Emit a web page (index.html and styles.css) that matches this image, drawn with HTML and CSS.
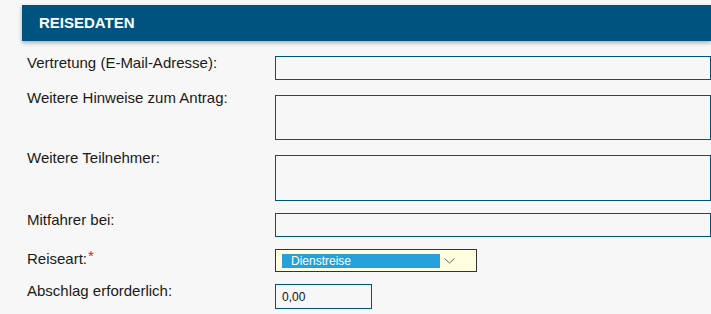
FILE: index.html
```html
<!DOCTYPE html>
<html lang="de">
<head>
    <meta charset="UTF-8">
    <meta name="viewport" content="width=device-width, initial-scale=1.0">
    <title>Reisedaten</title>
    <link rel="stylesheet" href="styles.css">
</head>
<body>

<section class="panel">
    <h2 class="panel-title">REISEDATEN</h2>

    <form class="travel-form">
        <div class="row wide-gap">
            <label for="vertretung">Vertretung (E-Mail-Adresse):</label>
            <input type="text" id="vertretung" class="field">
        </div>

        <div class="row row-area wide-gap">
            <label for="hinweise">Weitere Hinweise zum Antrag:</label>
            <textarea id="hinweise" class="field area-1"></textarea>
        </div>

        <div class="row row-area">
            <label for="teilnehmer">Weitere Teilnehmer:</label>
            <textarea id="teilnehmer" class="field area-2"></textarea>
        </div>

        <div class="row">
            <label for="mitfahrer">Mitfahrer bei:</label>
            <input type="text" id="mitfahrer" class="field">
        </div>

        <div class="row">
            <label>Reiseart:<span class="req">*</span></label>
            <div class="select" role="combobox" aria-expanded="false">
                <span class="select-value">Dienstreise</span>
                <svg class="chevron" width="11" height="6" viewBox="0 0 11 6">
                    <path d="M0.5 0.5 L5.5 5 L10.5 0.5" fill="none" stroke="#666" stroke-width="1"/>
                </svg>
            </div>
        </div>

        <div class="row">
            <label for="abschlag">Abschlag erforderlich:</label>
            <input type="text" id="abschlag" class="field small" value="0,00">
        </div>
    </form>
</section>

</body>
</html>
```

FILE: styles.css
```css
* {
    box-sizing: border-box;
    margin: 0;
    padding: 0;
}

body {
    font-family: 'Liberation Sans', Arial, sans-serif;
    background-color: #f7f7f7;
    color: #1a1a1a;
    overflow: hidden;
}

/* Kopfzeile */
.panel {
    padding-left: 22px;
    padding-top: 5px;
}

.panel-title {
    height: 36px;
    background-color: #00527f;
    color: #fff;
    font-size: 15px;
    font-weight: bold;
    line-height: 36px;
    padding-left: 17px;
    box-shadow: 0 2px 4px rgba(0, 0, 0, 0.3);
}

/* Formular */
.travel-form {
    padding: 15px 0 0 5px;
}

.row {
    display: flex;
    align-items: flex-start;
    margin-bottom: 12px;
}

.row.wide-gap {
    margin-bottom: 15px;
}

.row label {
    flex: 0 0 248px;
    font-size: 15px;
    line-height: 17px;
    margin-top: -2px;
}

.row-area label {
    margin-top: -6px;
}

.field {
    display: block;
    width: 470px;
    height: 24px;
    border: 1px solid #00527f;
    background-color: transparent;
    font-family: inherit;
    font-size: 12px;
    color: #111;
    padding: 0 6px;
    outline: none;
}

textarea.field {
    resize: none;
}

.area-1 {
    height: 45px;
}

.area-2 {
    height: 46px;
}

.small {
    width: 97px;
    height: 25px;
}

.req {
    color: #c0272d;
    font-size: 15px;
    vertical-align: 3px;
    margin-left: 1px;
}

/* Auswahlfeld */
.select {
    display: flex;
    align-items: center;
    width: 202px;
    height: 23px;
    border: 1px solid #333;
    background-color: #ffffe0;
    padding-left: 6px;
}

.select-value {
    width: 158px;
    height: 14px;
    background-color: #26a0da;
    color: #fff;
    font-size: 12px;
    line-height: 14px;
    padding-left: 9px;
}

.chevron {
    margin-left: 4px;
    margin-top: 1px;
}
```
